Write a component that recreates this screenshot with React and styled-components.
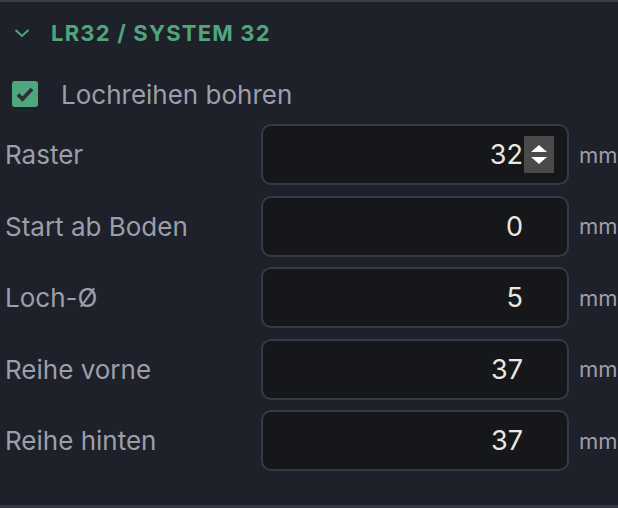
import { Fragment } from 'react';
import styled, { createGlobalStyle } from 'styled-components';

const GlobalStyle = createGlobalStyle`
  html, body {
    margin: 0;
    padding: 0;
    background: #1e2129;
  }
  body {
    font-family: Inter, 'Noto Sans', sans-serif;
  }
`;

const Panel = styled.section`
  box-sizing: border-box;
  width: 618px;
  height: 508px;
  background: #1e2129;
  border-top: 2px solid #3a3e49;
  border-bottom: 3px solid #353944;
  overflow: hidden;
`;

const Header = styled.div`
  display: flex;
  align-items: center;
  height: 62px;
  padding-left: 14px;
  gap: 21px;
`;

const Title = styled.h2`
  margin: 0;
  font-size: 22px;
  font-weight: 700;
  letter-spacing: 1.2px;
  color: #4fa57c;
`;

const CheckRow = styled.label`
  display: flex;
  align-items: center;
  gap: 23px;
  height: 60px;
  padding-left: 12px;
`;

const Box = styled.span`
  display: flex;
  align-items: center;
  justify-content: center;
  width: 26px;
  height: 26px;
  border-radius: 3px;
  background: #4fa57c;
`;

const CheckText = styled.span`
  font-size: 26px;
  color: #9c9fab;
`;

const Rows = styled.div`
  display: grid;
  grid-template-columns: 246px 308px auto;
  grid-auto-rows: 61px;
  row-gap: 10.5px;
  column-gap: 10px;
  align-items: center;
  padding-left: 5px;
`;

const Label = styled.span`
  font-size: 26px;
  color: #9c9fab;
`;

const Field = styled.div`
  box-sizing: border-box;
  height: 61px;
  display: flex;
  align-items: center;
  justify-content: flex-end;
  gap: 1px;
  padding-right: 13px;
  border: 2px solid #363a44;
  border-radius: 10px;
  background: #15171b;
`;

const Value = styled.span`
  font-size: 27px;
  color: #ebe8e1;
`;

const SpinSlot = styled.span`
  display: flex;
  flex-direction: column;
  align-items: center;
  justify-content: center;
  gap: 5px;
  width: 30px;
  height: 37px;
  background: ${p => (p.$active ? '#4a4a4a' : 'transparent')};
`;

const Unit = styled.span`
  font-size: 22px;
  color: #9c9fab;
`;

const fields = [
  { label: 'Raster', value: '32', spin: true },
  { label: 'Start ab Boden', value: '0' },
  { label: 'Loch-Ø', value: '5' },
  { label: 'Reihe vorne', value: '37' },
  { label: 'Reihe hinten', value: '37' },
];

function Chevron() {
  return (
    <svg width="16" height="10" viewBox="0 0 16 10">
      <polyline points="1.5,2 8,8 14.5,2" fill="none" stroke="#4fa57c" strokeWidth="2" />
    </svg>
  );
}

function Tick() {
  return (
    <svg width="18" height="16" viewBox="0 0 18 16">
      <polyline points="2,8.5 6.5,13 16,3" fill="none" stroke="#2c3036" strokeWidth="3.8" />
    </svg>
  );
}

function Spinner() {
  return (
    <>
      <svg width="16" height="7" viewBox="0 0 16 7">
        <polygon points="8,0 16,7 0,7" fill="#fff" />
      </svg>
      <svg width="16" height="7" viewBox="0 0 16 7">
        <polygon points="0,0 16,0 8,7" fill="#fff" />
      </svg>
    </>
  );
}

export default function App() {
  return (
    <Panel>
      <GlobalStyle />
      <Header>
        <Chevron />
        <Title>LR32 / SYSTEM 32</Title>
      </Header>
      <CheckRow>
        <Box>
          <Tick />
        </Box>
        <CheckText>Lochreihen bohren</CheckText>
      </CheckRow>
      <Rows>
        {fields.map(f => (
          <Fragment key={f.label}>
            <Label>{f.label}</Label>
            <Field>
              <Value>{f.value}</Value>
              <SpinSlot $active={f.spin}>{f.spin && <Spinner />}</SpinSlot>
            </Field>
            <Unit>mm</Unit>
          </Fragment>
        ))}
      </Rows>
    </Panel>
  );
}
